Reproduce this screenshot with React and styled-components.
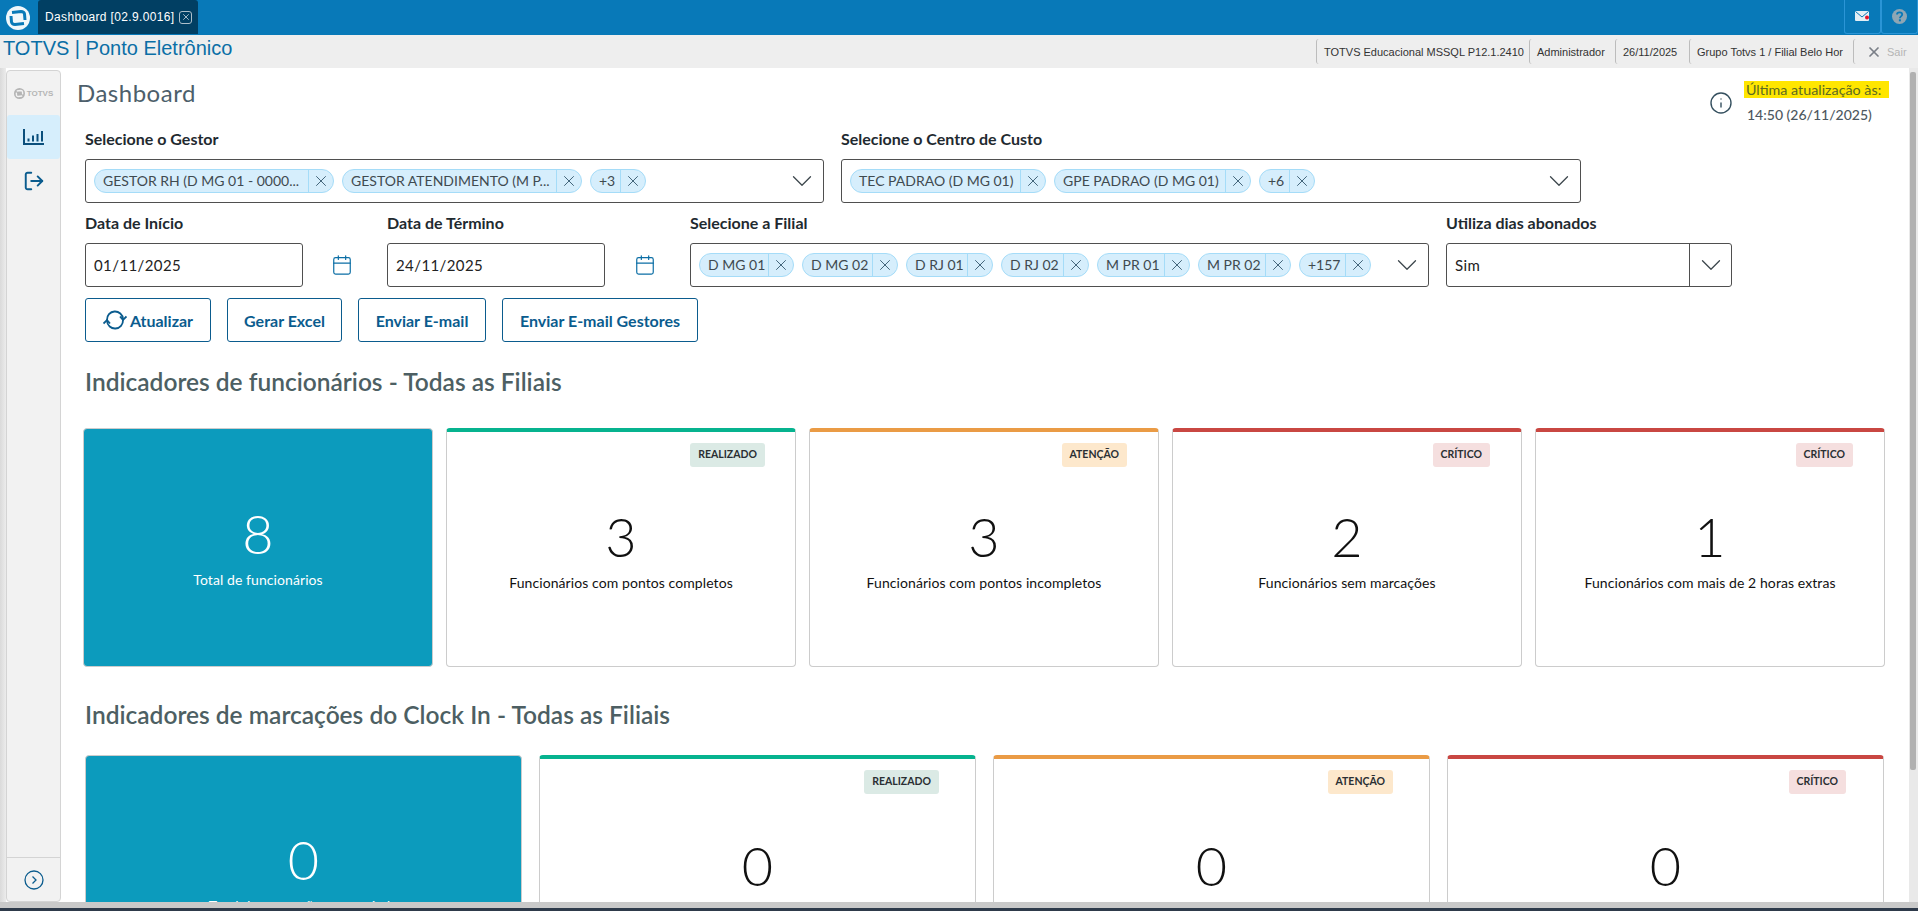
import React from 'react';
import styled, { createGlobalStyle } from 'styled-components';
import { X, ChevronDown, LogOut, Calendar, Info } from 'lucide-react';

const Global = createGlobalStyle`
  html, body { margin: 0; padding: 0; height: 100%; overflow: hidden; }
  body { font-family: "Lato", "Liberation Sans", sans-serif; background: #c4c4c4; }
  * { box-sizing: border-box; }
`;

const Page = styled.div`
  width: 1918px;
  height: 911px;
  display: flex;
  flex-direction: column;
  overflow: hidden;
  background: #c9c9c9;
`;
const TopBar = styled.div`
  height: 35px;
  flex: none;
  background: #0879b8;
  display: flex;
  align-items: stretch;
`;
const LogoBox = styled.div`
  width: 38px;
  display: flex;
  align-items: center;
  justify-content: center;
  padding-right: 2px;
`;
const Tab = styled.div`
  width: 160px;
  height: 34px;
  background: #013f63;
  color: #fff;
  border-radius: 3px 3px 0 0;
  display: flex;
  align-items: center;
  padding-left: 7px;
  gap: 5px;
  font-family: "Liberation Sans", sans-serif;
  font-size: 12px;
  letter-spacing: 0.35px;
  white-space: nowrap;
`;
const TabClose = styled.span`
  width: 13px;
  height: 13px;
  border: 1px solid #aebfca;
  border-radius: 3px;
  color: #c5d3dc;
  display: flex;
  align-items: center;
  justify-content: center;
`;
const TopSpacer = styled.div`
  flex: 1;
`;
const TopIcon = styled.div`
  width: 37px;
  height: 34px;
  border: 1px solid #2b95d6;
  border-top: none;
  border-radius: 0 0 3px 3px;
  display: flex;
  align-items: center;
  justify-content: center;
`;
const InfoBar = styled.div`
  height: 33px;
  flex: none;
  background: #eeeeee;
  display: flex;
  align-items: center;
  justify-content: space-between;
`;
const AppTitle = styled.div`
  font-family: "Liberation Sans", sans-serif;
  font-size: 20px;
  color: #0b6fa6;
  margin: -6px 0 0 3px;
`;
const InfoList = styled.div`
  display: flex;
  align-items: stretch;
  height: 25px;
  font-family: "Liberation Sans", sans-serif;
  font-size: 11px;
  color: #333;
`;
const InfoCell = styled.div`
  width: ${p => p.$w}px;
  border-left: 1px solid #bcbcbc;
  border-radius: 3px;
  display: flex;
  align-items: center;
  padding-left: 7px;
  white-space: nowrap;
  overflow: hidden;
`;
const SairCell = styled(InfoCell)`
  color: #b5b5b5;
  gap: 5px;
  padding-left: 12px;
  svg {
    color: #7a7f87;
  }
`;
const Body = styled.div`
  height: 834px;
  flex: none;
  display: flex;
  background: #fff;
  position: relative;
`;
const Gutter = styled.div`
  width: 6px;
  flex: none;
  background: linear-gradient(90deg, #dadada, #ececec);
`;
const Sidebar = styled.div`
  width: 55px;
  flex: none;
  margin-top: 2px;
  border: 1px solid #d4d4d4;
  border-radius: 4px;
  background: #f2f2f2;
  display: flex;
  flex-direction: column;
`;
const SideLogo = styled.div`
  height: 44px;
  display: flex;
  align-items: center;
  justify-content: center;
  gap: 2px;
  color: #b5b5b5;
  font-family: "Liberation Sans", sans-serif;
  font-size: 8px;
  font-weight: 700;
`;
const SideItem = styled.div`
  height: 44px;
  flex: none;
  display: flex;
  align-items: center;
  justify-content: center;
  background: ${p => (p.$active ? '#d6eefc' : 'transparent')};
  border-radius: 3px;
  color: #0b5c8e;
`;
const SideFooter = styled.div`
  margin-top: auto;
  height: 44px;
  border-top: 1px solid #d4d4d4;
  display: flex;
  align-items: center;
  justify-content: center;
`;
const Main = styled.div`
  flex: 1;
  min-width: 0;
  overflow: hidden;
  padding-left: 24px;
`;
const HeadRow = styled.div`
  height: 61px;
  display: flex;
  align-items: flex-start;
  justify-content: space-between;
  padding-top: 13px;
`;
const PageTitle = styled.h1`
  margin: 0 0 0 -8px;
  font-size: 24px;
  line-height: 24px;
  font-weight: 400;
  color: #4d5f6b;
  letter-spacing: 0.5px;
`;
const Updated = styled.div`
  display: flex;
  gap: 11px;
  margin-right: 29px;
`;
const UpdatedText = styled.div`
  width: 145px;
  font-size: 14px;
  color: #4d5860;
`;
const UpdatedMark = styled.mark`
  display: block;
  background: #ffe600;
  color: #5c6a20;
  height: 17px;
  line-height: 17px;
  font-size: 14.3px;
  padding-left: 2px;
  white-space: nowrap;
`;
const UpdatedTime = styled.div`
  margin: 8px 0 0 3px;
  line-height: 17px;
  font-weight: 500;
`;
const InfoIcon = styled.div`
  color: #35505f;
  margin-top: 10px;
  height: 24px;
`;
const FieldRow = styled.div`
  display: flex;
  margin-bottom: ${p => p.$mb || 0}px;
`;
const Field = styled.div`
  width: ${p => p.$w}px;
  margin-right: ${p => p.$mr || 0}px;
  flex: none;
`;
const Label = styled.div`
  font-size: 16px;
  font-weight: 700;
  color: #1f2a30;
  height: 30px;
  line-height: 20px;
  white-space: nowrap;
`;
const Box = styled.div`
  height: 44px;
  border: 1px solid #4f4f4f;
  border-radius: 3px;
  display: flex;
  align-items: center;
  background: #fff;
  padding-left: 8px;
  color: #222;
  font-size: 15px;
  letter-spacing: 0.4px;
`;
const Chips = styled.div`
  display: flex;
  gap: 8px;
  flex: 1;
  min-width: 0;
`;
const ChipWrap = styled.div`
  width: ${p => p.$w}px;
  height: 24px;
  flex: none;
  display: flex;
  border: 1px solid #a5dcf8;
  border-radius: 12px;
  background: #d6eefc;
  color: #3f4a50;
  font-size: 14px;
  letter-spacing: 0;
`;
const ChipText = styled.div`
  flex: 1;
  min-width: 0;
  line-height: 21px;
  padding-left: 8px;
  white-space: nowrap;
  overflow: hidden;
`;
const ChipClose = styled.div`
  width: 25px;
  flex: none;
  border-left: 1px solid #a5dcf8;
  display: flex;
  align-items: center;
  justify-content: center;
  color: #33566c;
`;
const Caret = styled.div`
  width: 42px;
  flex: none;
  display: flex;
  align-items: center;
  justify-content: center;
  color: #3d474d;
  align-self: stretch;
  border-left: ${p => (p.$divider ? '1px solid #4f4f4f' : 'none')};
`;
const SelectText = styled.div`
  flex: 1;
`;
const CalendarBox = styled.div`
  width: ${p => p.$w}px;
  flex: none;
  display: flex;
  align-items: center;
  justify-content: center;
  height: 44px;
  margin-top: 30px;
  padding-right: 6px;
  color: #0b6ea5;
`;
const Buttons = styled.div`
  display: flex;
  gap: 16px;
  margin-top: 11px;
`;
const Btn = styled.button`
  width: ${p => p.$w}px;
  height: 44px;
  border: 1px solid #0b5c8e;
  border-radius: 3px;
  background: #fff;
  color: #0b5c8e;
  font: 700 16px "Lato", sans-serif;
  display: flex;
  align-items: center;
  justify-content: center;
  gap: 3px;
  padding: 0;
`;
const SectionTitle = styled.h2`
  margin: 0;
  height: ${p => p.$h}px;
  padding-top: ${p => p.$pt}px;
  font-size: 24.5px;
  line-height: 30px;
  font-weight: 600;
  color: #4d5f63;
`;
const CardRow = styled.div`
  display: grid;
  grid-template-columns: repeat(${p => p.$n}, ${p => p.$cw}px);
  column-gap: ${p => p.$gap}px;
  height: 239px;
  margin-left: ${p => p.$ml}px;
`;
const Card = styled.div`
  position: relative;
  border: 1px solid #cccccc;
  border-radius: 4px;
  background: ${p => (p.$total ? '#0c9bbd' : '#fff')};
  color: ${p => (p.$total ? '#fff' : '#111')};
  border-top: ${p => (p.$bar ? `4px solid ${p.$bar}` : '1px solid #cccccc')};
  display: flex;
  flex-direction: column;
  align-items: center;
  padding-top: ${p => p.$top}px;
`;
const Badge = styled.div`
  position: absolute;
  top: 11px;
  right: ${p => p.$right}px;
  height: 24px;
  padding: 0 8px;
  border-radius: 3px;
  background: ${p => p.$bg};
  color: #2a2f33;
  font-size: 10.5px;
  font-weight: 700;
  line-height: 23px;
`;
const Num = styled.div`
  font-size: 54px;
  line-height: 54px;
  font-weight: 300;
`;
const CardLabel = styled.div`
  font-size: 14px;
  line-height: 20px;
  margin-top: 9px;
  letter-spacing: 0.08px;
  white-space: nowrap;
`;
const Rail = styled.div`
  position: absolute;
  right: 0;
  top: 0;
  bottom: 0;
  width: 9px;
  background: #e9e9e9;
`;
const Thumb = styled.div`
  width: 6px;
  height: 698px;
  margin: 4px 0 0 1px;
  background: #b1b1b1;
  border-radius: 2px;
`;
const FootBand = styled.div`
  height: 3px;
  flex: none;
  margin-top: auto;
  background: #2e3a4a;
`;

const Chip = ({ w, children }) => (
  <ChipWrap $w={w}>
    <ChipText>{children}</ChipText>
    <ChipClose><X size={18} strokeWidth={1.2} /></ChipClose>
  </ChipWrap>
);

const SelectCaret = ({ divider }) => (
  <Caret $divider={divider}><ChevronDown size={34} strokeWidth={0.9} /></Caret>
);

const ChartIcon = () => (
  <svg width="21" height="16" viewBox="0 0 21 16" fill="none" stroke="#0b4f7c" strokeWidth="2">
    <path d="M1 0v15h20" />
    <path d="M5.500 12.500v-3M10 12.500V6.500M14.500 12.500V5M19 12.500V2" />
  </svg>
);

// white disc with the two blue hooks of the swirl inside
const Logo = ({ size, color, bg }) => (
  <svg width={size} height={size} viewBox="0 0 24 24" fill="none">
    <circle cx="12" cy="12" r="12" fill={color} />
    <path d="M6 6.500L15 5.500Q18 5.500 18.500 8L19 14" stroke={bg} strokeWidth="3" />
    <path d="M18 17.500L9 18.500Q6 18.500 5.500 16L5 10" stroke={bg} strokeWidth="3" />
  </svg>
);

const MailIcon = () => (
  <svg width="16" height="13" viewBox="0 0 16 13">
    <rect x="0" y="1" width="14" height="10" rx="1" fill="#e3eef5" />
    <path d="M0.500 1.500 7 7 13.500 1.500" fill="none" stroke="#0879b8" strokeWidth="1" />
    <circle cx="12" cy="7.500" r="2" fill="#e5112a" />
  </svg>
);

const HelpIcon = () => (
  <svg width="15" height="15" viewBox="0 0 15 15">
    <circle cx="7.500" cy="7.500" r="7.500" fill="#8fa6b4" />
    <path d="M5 5.600c0-3 5.200-3 5.200 0 0 1.800-2.300 1.800-2.300 3.600" fill="none" stroke="#0879b8" strokeWidth="1.800" />
    <rect x="6.900" y="10.300" width="2" height="2" fill="#0879b8" />
  </svg>
);

const SyncIcon = () => (
  <svg width="24" height="20" viewBox="0 0 24 20" fill="none" stroke="#0b5c8e" strokeWidth="1.800">
    <path d="M4 10A8 8 0 0 1 20 9" />
    <path d="M17 6.500l3 3.500 3.500-3.500" />
    <path d="M20 10A8 8 0 0 1 4 11" />
    <path d="M.500 13.500L4 10l3 3.500" />
  </svg>
);

const ChevronCircle = () => (
  <svg width="20" height="20" viewBox="0 0 20 20" fill="none" stroke="#0b5c8e" strokeWidth="1.300">
    <circle cx="10" cy="10" r="9" />
    <path d="M8.500 6.500 12 10l-3.500 3.500" />
  </svg>
);

const CardItem = ({ total, bar, tag, tagBg, right, value, label, top }) => (
  <Card $total={total} $bar={bar} $top={top}>
    {tag && <Badge $bg={tagBg} $right={right}>{tag}</Badge>}
    <Num>{value}</Num>
    {label && <CardLabel>{label}</CardLabel>}
  </Card>
);

const GREEN = '#06b38f';
const ORANGE = '#ea9b45';
const RED = '#c94742';
const GREEN_BG = '#dbeae5';
const ORANGE_BG = '#fde8cc';
const RED_BG = '#f5dfdf';

export default function App() {
  return (
    <Page>
      <Global />
      <TopBar>
        <LogoBox><Logo size={24} color="#f0f7fb" bg="#0879b8" /></LogoBox>
        <Tab>
          Dashboard [02.9.0016]
          <TabClose><X size={10} strokeWidth={2} /></TabClose>
        </Tab>
        <TopSpacer />
        <TopIcon><MailIcon /></TopIcon>
        <TopIcon><HelpIcon /></TopIcon>
      </TopBar>
      <InfoBar>
        <AppTitle>TOTVS | Ponto Eletrônico</AppTitle>
        <InfoList>
          <InfoCell $w={213}>TOTVS Educacional MSSQL P12.1.2410</InfoCell>
          <InfoCell $w={86}>Administrador</InfoCell>
          <InfoCell $w={74}>26/11/2025</InfoCell>
          <InfoCell $w={164}>Grupo Totvs 1 / Filial Belo Hor</InfoCell>
          <SairCell $w={65}><X size={16} strokeWidth={2.6} /> Sair</SairCell>
        </InfoList>
      </InfoBar>
      <Body>
        <Gutter />
        <Sidebar>
          <SideLogo>
            <Logo size={11} color="#b5b5b5" bg="#f2f2f2" />
            TOTVS
          </SideLogo>
          <SideItem $active><ChartIcon /></SideItem>
          <SideItem><LogOut size={22} strokeWidth={2.1} /></SideItem>
          <SideFooter><ChevronCircle /></SideFooter>
        </Sidebar>
        <Main>
          <HeadRow>
            <PageTitle>Dashboard</PageTitle>
            <Updated>
              <InfoIcon><Info size={24} strokeWidth={1.4} /></InfoIcon>
              <UpdatedText>
                <UpdatedMark>Última atualização às:</UpdatedMark>
                <UpdatedTime>14:50 (26/11/2025)</UpdatedTime>
              </UpdatedText>
            </Updated>
          </HeadRow>
          <FieldRow $mb={10}>
            <Field $w={739} $mr={17}>
              <Label>Selecione o Gestor</Label>
              <Box>
                <Chips>
                  <Chip w={240}>GESTOR RH (D MG 01 - 0000...</Chip>
                  <Chip w={240}>GESTOR ATENDIMENTO (M P...</Chip>
                  <Chip w={56}>+3</Chip>
                </Chips>
                <SelectCaret />
              </Box>
            </Field>
            <Field $w={740}>
              <Label>Selecione o Centro de Custo</Label>
              <Box>
                <Chips>
                  <Chip w={196}>TEC PADRAO (D MG 01)</Chip>
                  <Chip w={197}>GPE PADRAO (D MG 01)</Chip>
                  <Chip w={56}>+6</Chip>
                </Chips>
                <SelectCaret />
              </Box>
            </Field>
          </FieldRow>
          <FieldRow>
            <Field $w={218}>
              <Label>Data de Início</Label>
              <Box>01/11/2025</Box>
            </Field>
            <CalendarBox $w={84}><Calendar size={22} strokeWidth={1.3} /></CalendarBox>
            <Field $w={218}>
              <Label>Data de Término</Label>
              <Box>24/11/2025</Box>
            </Field>
            <CalendarBox $w={85}><Calendar size={22} strokeWidth={1.3} /></CalendarBox>
            <Field $w={739} $mr={17}>
              <Label>Selecione a Filial</Label>
              <Box>
                <Chips>
                  <Chip w={95}>D MG 01</Chip>
                  <Chip w={96}>D MG 02</Chip>
                  <Chip w={87}>D RJ 01</Chip>
                  <Chip w={88}>D RJ 02</Chip>
                  <Chip w={93}>M PR 01</Chip>
                  <Chip w={93}>M PR 02</Chip>
                  <Chip w={72}>+157</Chip>
                </Chips>
                <SelectCaret />
              </Box>
            </Field>
            <Field $w={286}>
              <Label>Utiliza dias abonados</Label>
              <Box>
                <SelectText>Sim</SelectText>
                <SelectCaret divider />
              </Box>
            </Field>
          </FieldRow>
          <Buttons>
            <Btn $w={126}><SyncIcon />Atualizar</Btn>
            <Btn $w={115}>Gerar Excel</Btn>
            <Btn $w={128}>Enviar E-mail</Btn>
            <Btn $w={196}>Enviar E-mail Gestores</Btn>
          </Buttons>
          <SectionTitle $h={86} $pt={25}>Indicadores de funcionários - Todas as Filiais</SectionTitle>
          <CardRow $n={5} $cw={350} $gap={13} $ml={-2}>
            <CardItem total value="8" label="Total de funcionários" top={78} />
            <CardItem bar={GREEN} tag="REALIZADO" tagBg={GREEN_BG} right={30} value="3" label="Funcionários com pontos completos" top={78} />
            <CardItem bar={ORANGE} tag="ATENÇÃO" tagBg={ORANGE_BG} right={31} value="3" label="Funcionários com pontos incompletos" top={78} />
            <CardItem bar={RED} tag="CRÍTICO" tagBg={RED_BG} right={31} value="2" label="Funcionários sem marcações" top={78} />
            <CardItem bar={RED} tag="CRÍTICO" tagBg={RED_BG} right={31} value="1" label="Funcionários com mais de 2 horas extras" top={78} />
          </CardRow>
          <SectionTitle $h={88} $pt={33}>Indicadores de marcações do Clock In - Todas as Filiais</SectionTitle>
          <CardRow $n={4} $cw={437} $gap={17} $ml={0}>
            <CardItem total value="0" label="Total de marcações no período" top={77} />
            <CardItem bar={GREEN} tag="REALIZADO" tagBg={GREEN_BG} right={36} value="0" top={80} />
            <CardItem bar={ORANGE} tag="ATENÇÃO" tagBg={ORANGE_BG} right={36} value="0" top={80} />
            <CardItem bar={RED} tag="CRÍTICO" tagBg={RED_BG} right={37} value="0" top={80} />
          </CardRow>
        </Main>
        <Rail><Thumb /></Rail>
      </Body>
      <FootBand />
    </Page>
  );
}
